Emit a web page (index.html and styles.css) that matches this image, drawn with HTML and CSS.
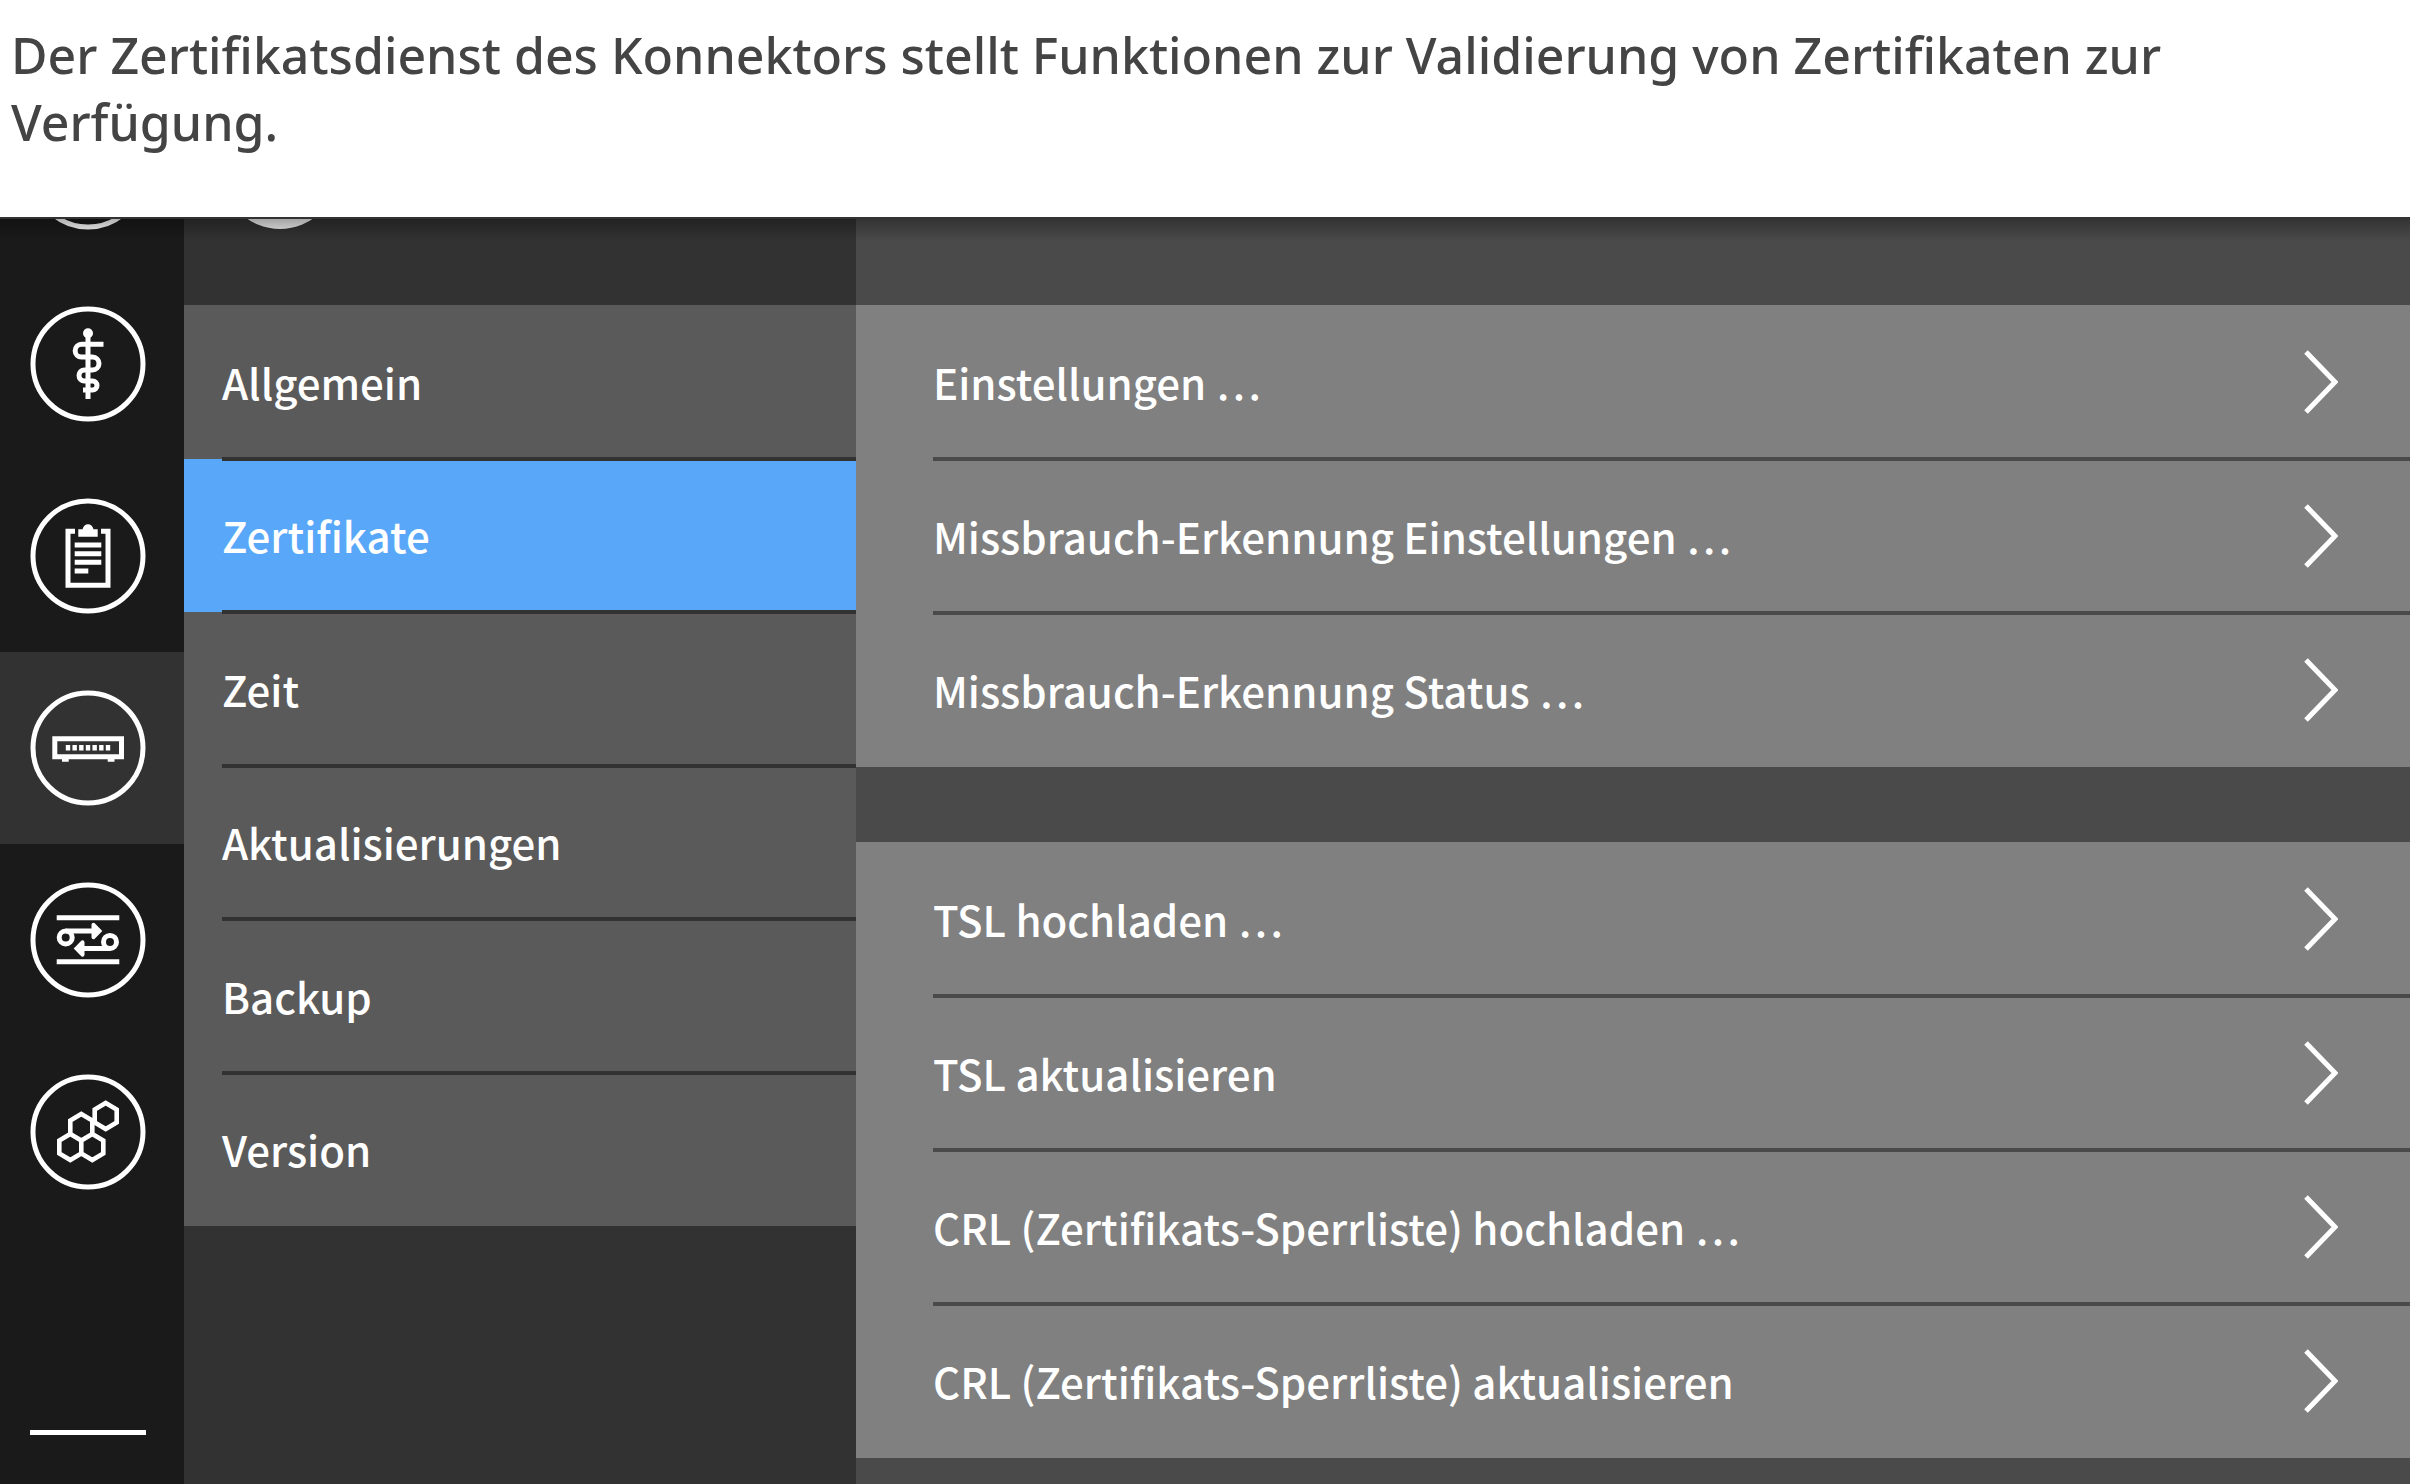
FILE: index.html
```html
<!DOCTYPE html>
<html lang="de">
<head>
<meta charset="utf-8">
<meta name="viewport" content="width=device-width, initial-scale=1">
<title>Zertifikatsdienst</title>
<link rel="stylesheet" href="styles.css">
</head>
<body>
<p class="intro">Der Zertifikatsdienst des Konnektors stellt Funktionen zur Validierung von Zertifikaten zur Verfügung.</p>
<main class="app">
  <nav class="rail" aria-label="Bereiche">
    <div class="rail-items">
      <a class="rail-item" href="#start" aria-label="Start"><svg class="icon" viewBox="0 0 116 116"><circle class="ring" cx="58" cy="58" r="55"/></svg></a>
      <a class="rail-item" href="#praxis" aria-label="Praxis"><svg class="icon" viewBox="0 0 116 116"><circle class="ring" cx="58" cy="58" r="55"/><circle class="solid" cx="58" cy="27.3" r="5"/><path d="M58 27V93M73.500 38.300H51.500a6.350 6.350 0 0 0 0 12.700H62.500a6.500 6.500 0 0 1 0 13H54.500a5.500 5.500 0 0 0 0 11H62.500a4.500 4.500 0 0 1 0 9H53"/></svg></a>
      <a class="rail-item" href="#protokoll" aria-label="Protokoll"><svg class="icon" viewBox="0 0 116 116"><circle class="ring" cx="58" cy="58" r="55"/><path d="M45 33.300H38V87.200H78V33.300H71M44.700 47H71.300M44.700 55.700H71.300M44.700 64.300H71.300M44.700 73H58.300"/><path class="solid" d="M48.300 31.300H52.500Q54 26.300 58 26.300T63.500 31.300H67.700V38.700H48.300Z"/></svg></a>
      <a class="rail-item active" href="#system" aria-label="System" aria-current="true"><svg class="icon" viewBox="0 0 116 116"><circle class="ring" cx="58" cy="58" r="55"/><path d="M24.800 48.800H91.500V66.800H24.800Z"/><path class="solid" d="M32 68H38.700V71.700H32ZM77.700 68H84.500V71.700H77.700Z"/><path d="M35.800 57.700H81" stroke-width="5.500" stroke-dasharray="4.400 2.267"/></svg></a>
      <a class="rail-item" href="#netzwerk" aria-label="Netzwerk"><svg class="icon" viewBox="0 0 116 116"><circle class="ring" cx="58" cy="58" r="55"/><path d="M26.700 35.700H89.300M26.700 79.700H89.300M36 49H64M80 66.500H52"/><circle cx="35.700" cy="55.500" r="6.500"/><circle cx="80" cy="59.900" r="6.500"/><path class="solid" d="M61.500 42.500Q62 40 64.500 41L72.300 49L64.500 57Q62 58 61.500 55.500ZM54.500 60Q54 57.500 51.500 58.500L43.700 66.500L51.500 74.500Q54 75.500 54.500 73Z"/></svg></a>
      <a class="rail-item" href="#module" aria-label="Module"><svg class="icon" viewBox="0 0 116 116"><circle class="ring" cx="58" cy="58" r="55"/><path stroke-width="4.600" d="M75.700 29L86.700 35.500V48.500L75.700 55L64.700 48.500V35.500ZM51.300 40L62.300 46.500V60L51.300 66.500L40.300 60V46.500ZM40.300 60L51.300 66.500V79.500L40.300 86L29.300 79.500V66.500ZM62.300 60L73.300 66.500V79.500L62.300 86L51.300 79.500V66.500Z"/></svg></a>
    </div>
    <hr class="rail-line">
  </nav>
  <nav class="menu" aria-label="System">
    <div class="menu-head"><span class="avatar"></span></div>
    <div class="menu-list">
      <a class="row" href="#allgemein">Allgemein</a>
      <a class="row active" href="#zertifikate" aria-current="page">Zertifikate</a>
      <a class="row" href="#zeit">Zeit</a>
      <a class="row" href="#aktualisierungen">Aktualisierungen</a>
      <a class="row" href="#backup">Backup</a>
      <a class="row" href="#version">Version</a>
    </div>
  </nav>
  <section class="content" aria-label="Zertifikate">
    <div class="group">
      <button class="row" type="button">Einstellungen …<svg class="chevron" viewBox="0 0 34 66"><path d="M2 3L31 33L2 63"/></svg></button>
      <button class="row" type="button">Missbrauch-Erkennung Einstellungen …<svg class="chevron" viewBox="0 0 34 66"><path d="M2 3L31 33L2 63"/></svg></button>
      <button class="row" type="button">Missbrauch-Erkennung Status …<svg class="chevron" viewBox="0 0 34 66"><path d="M2 3L31 33L2 63"/></svg></button>
    </div>
    <div class="group">
      <button class="row" type="button">TSL hochladen …<svg class="chevron" viewBox="0 0 34 66"><path d="M2 3L31 33L2 63"/></svg></button>
      <button class="row" type="button">TSL aktualisieren<svg class="chevron" viewBox="0 0 34 66"><path d="M2 3L31 33L2 63"/></svg></button>
      <button class="row" type="button">CRL (Zertifikats-Sperrliste) hochladen …<svg class="chevron" viewBox="0 0 34 66"><path d="M2 3L31 33L2 63"/></svg></button>
      <button class="row" type="button">CRL (Zertifikats-Sperrliste) aktualisieren<svg class="chevron" viewBox="0 0 34 66"><path d="M2 3L31 33L2 63"/></svg></button>
    </div>
  </section>
</main>
</body>
</html>
```
FILE: styles.css
```css
* { box-sizing: border-box; }

body {
  margin: 0;
  min-height: 100vh;
  display: flex;
  flex-direction: column;
  background: #fff;
  font-family: "Noto Sans CJK SC", "Noto Sans", sans-serif;
}

.intro {
  margin: 0;
  padding: 22px 11px 61px;
  color: #444;
  font: 500 50px/67px "Noto Sans", sans-serif;
}

.app {
  position: relative;
  flex: 1;
  display: grid;
  grid-template-columns: 184px 672px 1fr;
  overflow: hidden;
}

/* shadow cast by the header above the scrolled panels */
.app::before {
  content: "";
  position: absolute;
  inset: 0 0 auto;
  height: 22px;
  border-top: 2px solid #333;
  background: linear-gradient(rgba(0, 0, 0, .3), rgba(0, 0, 0, 0));
  z-index: 2;
}

.rail { background: #1a1a1a; }

.rail-items { margin-top: -141px; }

.rail-item {
  display: flex;
  align-items: center;
  height: 192px;
  padding-left: 30px;
}

.rail-item.active { background: #323232; }

.icon {
  width: 116px;
  height: 116px;
  fill: none;
  stroke: #fff;
  stroke-width: 5;
}

.icon .solid { fill: #fff; stroke: none; }

.rail-line {
  width: 116px;
  height: 5px;
  margin: 202px 0 0 30px;
  border: 0;
  background: #fff;
}

.menu { background: #323232; }

.menu-head {
  display: flex;
  align-items: flex-end;
  height: 88px;
  padding: 0 0 76px 38px;
}

.avatar {
  flex: none;
  width: 116px;
  height: 116px;
  border-radius: 50%;
  background: #eee;
}

.menu-list {
  display: grid;
  grid-auto-rows: 1fr;
  min-height: 921px;
  background: #5a5a5a;
}

.content {
  display: flex;
  flex-direction: column;
  gap: 75px;
  padding-top: 88px;
  background: #4a4a4a;
}

.group {
  display: flex;
  flex-direction: column;
  background: #808080;
}

.row {
  position: relative;
  display: flex;
  align-items: center;
  justify-content: space-between;
  padding: 0 0 0 38px;
  border: 0;
  background: none;
  color: #fff;
  font: 500 42px/66px "Noto Sans CJK SC", "Noto Sans", sans-serif;
  text-align: left;
  text-decoration: none;
}

.content .row {
  min-height: 154px;
  padding: 0 72px 0 77px;
}

.row.active { background: #59a7f8; }

/* divider between neighbouring rows */
.row + .row::before {
  content: "";
  position: absolute;
  top: -2px;
  left: 38px;
  right: 0;
  height: 4px;
  background: #323232;
}

.content .row + .row::before {
  left: 77px;
  background: #4a4a4a;
}

.chevron {
  flex: none;
  width: 34px;
  height: 66px;
  fill: none;
  stroke: #fff;
  stroke-width: 5;
}
```
